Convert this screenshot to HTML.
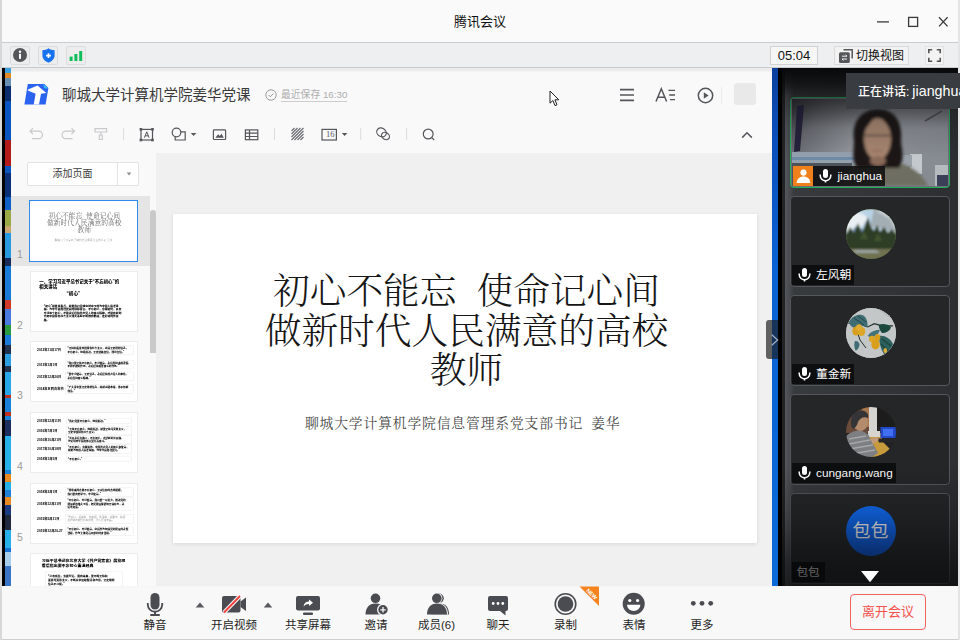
<!DOCTYPE html>
<html lang="zh-CN">
<head>
<meta charset="utf-8">
<title>腾讯会议</title>
<style>
*{box-sizing:border-box;margin:0;padding:0}
html,body{width:960px;height:640px;overflow:hidden;background:#fff}
body{font-family:"Liberation Sans","Noto Sans CJK SC",sans-serif;color:#222;position:relative}
.abs{position:absolute}
#win{position:absolute;left:0;top:0;width:960px;height:640px;background:#fff;overflow:hidden}
/* title bar */
#titlebar{position:absolute;left:0;top:0;width:960px;height:42px;background:#fafafa}
#titlebar .t{position:absolute;left:0;width:960px;top:13px;text-align:center;font-size:13px;line-height:18px;color:#111}
/* status bar */
#status{position:absolute;left:0;top:42px;width:960px;height:26px;background:#eeeff1;border-top:1px solid #cbcccd;border-bottom:1px solid #c9cacb}
.sbtn{position:absolute;top:2.500px;width:20px;height:19.500px;border:1px solid #dcdcdc;border-radius:2px;background:#ededed}
#time{position:absolute;left:770px;top:3px;width:48px;height:19px;border:1px solid #d2d2d2;background:#f6f6f6;font-size:13px;line-height:18px;text-align:center;color:#111}
#switch{position:absolute;left:834px;top:3px;width:75px;height:19px;border:1px solid #dadada;background:#f2f2f2;font-size:12px;line-height:18px;color:#111}
/* left desktop strip */
#edgeL{position:absolute;left:0;top:0;width:2px;height:640px;background:#d8d8d8}
#strip{position:absolute;left:2px;top:68px;width:9px;height:518px;background:#000}
#strip i{position:absolute;left:2.500px;top:0;width:6.500px;height:518px;background:linear-gradient(180deg,#3aa0e0 0px,#3aa0e0 5px,#e08a20 5px,#e08a20 10px,#6a8fb0 10px,#6a8fb0 18px,#0c2c6c 18px,#0c2c6c 33px,#0a55c0 33px,#0a55c0 72px,#b31a1a 72px,#b31a1a 98px,#0a55c0 98px,#0a55c0 105px,#0c3078 105px,#0c3078 129px,#1060c8 129px,#1060c8 142px,#9aa84a 142px,#9aa84a 158px,#c8a870 158px,#c8a870 165px,#2a9ae0 165px,#2a9ae0 190px,#1a2a58 190px,#1a2a58 198px,#1a7ad8 198px,#1a7ad8 232px,#d03828 232px,#d03828 241px,#4a7ae0 241px,#4a7ae0 257px,#2a9a40 257px,#2a9a40 267px,#1a7ad8 267px,#1a7ad8 277px,#22324e 277px,#22324e 286px,#2aa0e0 286px,#2aa0e0 298px,#22324e 298px,#22324e 304px,#28a8e8 304px,#28a8e8 327px,#c03020 327px,#c03020 330px,#1a80d8 330px,#1a80d8 344px,#c03020 344px,#c03020 348px,#1a80d8 348px,#1a80d8 352px,#1c2c5c 352px,#1c2c5c 368px,#28b0e8 368px,#28b0e8 402px,#1a80d8 402px,#1a80d8 406px,#e88a20 406px,#e88a20 414px,#28b0e8 414px,#28b0e8 422px,#2080d8 422px,#2080d8 429px,#e88a20 429px,#e88a20 437px,#1c3a80 437px,#1c3a80 447px,#20283c 447px,#20283c 462px,#28b0e8 462px,#28b0e8 480px,#1a70d0 480px,#1a70d0 484px,#a8cdea 484px,#a8cdea 498px,#3a74c4 498px,#3a74c4 518px)}
/* doc */
#doc{position:absolute;left:11px;top:68px;width:761px;height:518px;background:linear-gradient(180deg,#ebebeb 0,#ececec 2.500px,#f9f9fa 4.500px,#f9f9fa 100%)}
#canvas{position:absolute;left:144.500px;top:84.500px;width:616px;height:433.500px;background:#f0f0f0}
#slide{position:absolute;left:162px;top:146px;width:584px;height:329px;background:#fff;box-shadow:0 1px 4px rgba(0,0,0,.100)}
.serif{font-family:"Liberation Serif","Noto Serif CJK SC",serif}

/* left panel */
#addbtn{position:absolute;left:16px;top:94px;width:112px;height:24px;border:1px solid #e3e3e5;border-radius:2px;background:#fff;font-size:10px;line-height:22px;color:#3c3c3c}
#addbtn .sep{position:absolute;left:89px;top:0;width:1px;height:22px;background:#e3e3e5}
#selrow{position:absolute;left:0;top:128px;width:139px;height:70px;background:#e5e5e6}
#sbar{position:absolute;left:139px;top:142px;width:5.500px;height:142.500px;background:#c9c9c9;border-radius:3px 3px 0 0}
.th{position:absolute;left:19px;width:108px;height:61px;background:#fff;border:1px solid #ececee;overflow:hidden}
.th.sel{left:18px;width:109px;height:62px;border:1.500px solid #2d8cf0}
.tn{position:absolute;left:3px;width:12px;text-align:center;font-size:10.500px;line-height:10px;color:#9c9c9c}
.mini{position:absolute;left:0;top:0;width:584px;height:329px;transform:scale(0.1849);transform-origin:0 0;color:#000}
.mini .b{position:absolute;font-weight:900;white-space:nowrap;font-family:"Liberation Sans","Noto Sans CJK SC",sans-serif}
.mini .bx{position:absolute;border:2px solid #e2e2e2}
/* right panel */
#right{position:absolute;left:772px;top:68px;width:186px;height:518px;background:#000;overflow:hidden}
#right .blue{position:absolute;left:0;top:0;width:6px;height:518px;background:linear-gradient(180deg,#0b3f9c 0,#0a4db8 60px,#0a62d4 200px,#0a6ad8 100%)}
#right .gut{position:absolute;left:10px;top:0;width:3px;height:518px;background:#222325}
#right .pan{position:absolute;left:13px;top:0;width:173px;height:518px;background:linear-gradient(90deg,#54575c 0,#43464a 6px,#383b3e 9px,#35383b 60px,#2c2e31 100%)}
#right .fadeT{position:absolute;left:10px;top:0;width:176px;height:120px;background:linear-gradient(180deg,rgba(6,7,8,.96) 0,rgba(8,9,10,.800) 14px,rgba(10,11,12,.420) 30px,rgba(10,11,12,.150) 55px,rgba(10,11,12,0) 90px)}
#right .fadeB{position:absolute;left:10px;top:398px;width:176px;height:120px;background:linear-gradient(180deg,rgba(10,11,12,0) 0,rgba(10,11,12,.250) 50px,rgba(8,9,10,.620) 100px,rgba(8,9,10,.720) 120px)}
.tile{position:absolute;left:18px;width:160px;height:91px;border:1px solid #54575b;border-radius:4px;background:#242628;overflow:hidden}
.lab{position:absolute;left:1px;bottom:1px;height:20px;background:#0d0e0f;color:#fff;font-size:11.800px;line-height:20px;padding:0 3px 0 24px;white-space:nowrap}
.lab svg{position:absolute;left:5.500px;top:3px}
.av{position:absolute;left:54.500px;top:12px;width:50px;height:50px;border-radius:50%;overflow:hidden}
#tip{position:absolute;left:846px;top:73px;width:114px;height:36px;background:#393c40;color:#fff;font-size:12px;font-weight:500;line-height:36px;padding-left:12px;white-space:nowrap;overflow:hidden}
#handle{position:absolute;left:766px;top:320px;width:12px;height:39px;border-radius:3px 0 0 3px;background:rgba(28,28,30,.68)}
/* bottom bar */
#bottom{position:absolute;left:0;top:586px;width:960px;height:54px;background:#f8f8f8;border-top:1px solid #f5f5f5}
.bi{position:absolute;top:31px;font-size:11.500px;line-height:14px;color:#1e1e1e;text-align:center;width:70px;white-space:nowrap;font-weight:400}
</style>
</head>
<body>
<div id="win">
  <div id="titlebar"><div class="t">腾讯会议</div>
    <svg class="abs" style="left:870px;top:10px" width="84" height="24" viewBox="0 0 84 24" fill="none" stroke="#3a3a3a" stroke-width="1.3">
      <path d="M7 11.9H19"/>
      <rect x="38.6" y="7.4" width="9" height="9"/>
      <path d="M69 7.3L77.6 16.4M77.6 7.3L69 16.4"/>
    </svg>
  </div>
  <div id="status">
    <div class="sbtn" style="left:10px"><svg class="abs" style="left:2px;top:1.5px" width="14" height="14" viewBox="0 0 14 14"><circle cx="7" cy="7" r="7" fill="#55565a"/><rect x="6" y="5.8" width="2" height="5" fill="#fff"/><circle cx="7" cy="3.7" r="1.2" fill="#fff"/></svg></div>
    <div class="sbtn" style="left:38px"><svg class="abs" style="left:2.5px;top:1px" width="13" height="15" viewBox="0 0 13 15"><path d="M6.5 0.3C4.6 1.7 2.6 2.2 0.4 2.3V7.6C0.4 10.9 3 13.4 6.5 14.7C10 13.4 12.6 10.9 12.6 7.6V2.3C10.4 2.2 8.4 1.7 6.5 0.3Z" fill="#1872f0"/><path d="M6.5 5.2V10M4.1 7.6H8.9" stroke="#fff" stroke-width="1.7"/></svg></div>
    <div class="sbtn" style="left:66px"><svg class="abs" style="left:2px;top:2px" width="14" height="13" viewBox="0 0 14 13" fill="#0fbe5b"><rect x="0.6" y="7.6" width="3" height="4.4"/><rect x="5.4" y="5" width="3" height="7"/><rect x="10.2" y="2" width="3" height="10"/></svg></div>
    <div id="time">05:04</div>
    <div id="switch"><svg class="abs" style="left:4px;top:2px" width="14" height="14" viewBox="0 0 14 14"><path d="M4.5 0.8H13.2V9.5" fill="none" stroke="#55565a" stroke-width="1.5"/><rect x="0" y="3.2" width="10.8" height="10.8" rx="1.5" fill="#55565a"/><path d="M3 7.2H8M6.6 5.8L8 7.2M8 10H3M4.4 11.4L3 10" stroke="#f2f2f2" stroke-width="1" fill="none"/></svg><span style="position:absolute;left:21px;top:0">切换视图</span></div>
    <div class="abs" style="left:925px;top:3px;width:19px;height:19px;border:1px solid #e2e2e2;background:#f3f3f3"><svg class="abs" style="left:2px;top:2px" width="13" height="13" viewBox="0 0 13 13" fill="none" stroke="#55565a" stroke-width="1.6"><path d="M0.8 4.2V0.8H4.2M8.8 0.8H12.2V4.2M12.2 8.8V12.2H8.8M4.2 12.2H0.8V8.8"/></svg></div>
  </div>
  <div id="strip"><i></i></div>
  <div id="doc">

    <!-- doc header -->
    <svg class="abs" style="left:13px;top:16px" width="26" height="22" viewBox="0 0 26 22">
      <path d="M3.800 0H20.400L24.400 4.100L21.600 20.400H0.400Z" fill="#2b63f0"/>
      <path d="M19 0.100L24.400 4.500L20.300 4.200Z" fill="#35c4f2"/>
      <path d="M13.500 1.600L22.250 9.100L17 9.750L15 20.400H9.750L11.600 9.750L4.300 6.700L3.500 5.800Z" fill="#fff"/>
    </svg>
    <div class="abs" style="left:51px;top:17px;font-size:14.5px;line-height:20px;color:#3a3a3a;white-space:nowrap">聊城大学计算机学院姜华党课</div>
    <svg class="abs" style="left:253.600px;top:21px" width="12" height="12" viewBox="0 0 12 12" fill="none" stroke="#9a9a9a" stroke-width="1"><circle cx="6" cy="6" r="5.2"/><path d="M3.6 6.1L5.3 7.8L8.5 4.5"/></svg>
    <div class="abs" style="left:270px;top:20.500px;font-size:9.800px;line-height:12px;color:#adadad;white-space:nowrap;border-bottom:1px solid #cdcdcd">最近保存 16:30</div>
    <!-- cursor -->
    <svg class="abs" style="left:538px;top:22px" width="12" height="17" viewBox="0 0 12 17"><path d="M1 1V13.2L3.9 10.5L6 15.6L8 14.8L5.9 9.8H9.8Z" fill="#fff" stroke="#222" stroke-width="1"/></svg>
    <!-- header right icons -->
    <svg class="abs" style="left:608px;top:20px" width="16" height="14" viewBox="0 0 16 14" stroke="#55565a" stroke-width="1.7"><path d="M1 1.6H15M1 7H15M1 12.4H15"/></svg>
    <svg class="abs" style="left:644px;top:19px" width="21" height="16" viewBox="0 0 21 16" fill="none" stroke="#55565a" stroke-width="1.5"><path d="M1 14.5L6.3 1.8L11.6 14.5M2.9 10.2H9.7"/><path d="M13.4 3.4H20M14.2 8H20M15 12.6H20" stroke-width="1.3"/></svg>
    <svg class="abs" style="left:686px;top:19px" width="17" height="17" viewBox="0 0 17 17"><circle cx="8.5" cy="8.5" r="7.2" fill="none" stroke="#55565a" stroke-width="1.5"/><path d="M6.8 5.2L11.6 8.5L6.8 11.8Z" fill="#55565a"/></svg>
    <div class="abs" style="left:709.500px;top:19px;width:1px;height:17px;background:#ebebed"></div>
    <div class="abs" style="left:723px;top:15px;width:22px;height:22px;border-radius:3px;background:#e9e9ea"></div>
    <!-- toolbar -->
    <svg class="abs" style="left:14px;top:54px" width="440" height="24" viewBox="0 0 440 24" fill="none" stroke="#55565a" stroke-width="1.2">
      <g stroke="#c9c9cc">
        <path d="M8 6.200L5 9.200L8 12.200M5.300 9.200H13.700A3.600 3.600 0 0 1 13.700 16.600H7"/>
        <path d="M46.500 6.200L49.500 9.200L46.500 12.200M49.200 9.200H40.800A3.600 3.600 0 0 0 40.800 16.600H47.500"/>
        <path d="M70 6.600H81.600V10H70ZM75.800 10V13M74.300 13H77.300V17.500H74.300Z"/>
      </g>
      <path d="M98.600 6V18M249.500 6V18M335.700 6V18M381.600 6V18" stroke="#dcdcde" stroke-width="1"/>
      <!-- text box -->
      <rect x="116" y="7.400" width="11.500" height="10.600"/>
      <g fill="#55565a" stroke="none"><rect x="114.600" y="6" width="2.600" height="2.600"/><rect x="126.200" y="6" width="2.600" height="2.600"/><rect x="114.600" y="16.700" width="2.600" height="2.600"/><rect x="126.200" y="16.700" width="2.600" height="2.600"/></g>
      <path d="M119.400 15.700L121.750 9.800L124.100 15.700M120.200 13.800H123.300" stroke-width="1"/>
      <!-- shapes -->
      <circle cx="151.500" cy="10.500" r="4.300"/>
      <path d="M155.900 9.800H160.200V18H150.200V14.800"/>
      <path d="M165.800 11H171.400L168.600 14Z" fill="#55565a" stroke="none"/>
      <!-- image -->
      <rect x="188.400" y="7.900" width="12.200" height="9.600" rx="0.800"/>
      <path d="M190.400 15.700L193.100 12.300L194.800 14.100L196.500 11.700L198.800 15.700Z" fill="#55565a" stroke="none"/>
      <!-- table -->
      <rect x="220.400" y="7.900" width="12.400" height="9.800"/>
      <path d="M220.400 11.200H232.800M220.400 14.500H232.800M224.500 7.900V17.700"/>
      <!-- hatch -->
      <g stroke-width="1.100" stroke="#6a6b70"><path d="M266.500 9L269.500 6M266.500 12L272.500 6M266.500 15L275.500 6M266.500 18L278.500 6M269.500 18L278.500 9M272.500 18L278.500 12M275.500 18L278.500 15"/></g>
      <!-- 16 box -->
      <rect x="297" y="7.400" width="14.400" height="10.600"/>
      <!-- caret -->
      <path d="M316.800 11H322.400L319.600 14Z" fill="#55565a" stroke="none"/>
      <!-- link-ish -->
      <ellipse cx="356.500" cy="10.400" rx="5" ry="4.200" transform="rotate(35 356.500 10.400)"/>
      <ellipse cx="360.500" cy="14" rx="4.200" ry="3.300" transform="rotate(35 360.500 14)"/>
      <!-- search -->
      <circle cx="403.200" cy="12" r="4.900"/>
      <path d="M406.800 15.600L409.200 18"/>
    </svg>
    <div class="abs" style="left:313.200px;top:62.300px;width:12px;font-size:8.500px;line-height:9px;color:#55565a;text-align:center;font-family:'Liberation Serif',serif">16</div>
    <svg class="abs" style="left:729.500px;top:62.500px" width="12" height="8" viewBox="0 0 12 8" fill="none" stroke="#55565a" stroke-width="1.500"><path d="M1.200 6.600L6 1.800L10.800 6.600"/></svg>

    <!-- left thumbnails panel -->
    <div id="addbtn"><span style="position:absolute;left:0;width:89px;text-align:center">添加页面</span><span class="sep"></span><svg class="abs" style="left:98px;top:9px" width="6" height="4" viewBox="0 0 6 4"><path d="M0.800 0.500H5.200L3 3.500Z" fill="#8a8a8a"/></svg></div>
    <div id="selrow"></div>
    <div id="sbar"></div>
    <div class="th sel" style="top:131.5px"><div class="mini"><div class="serif" style="position:absolute;left:1.500px;top:58px;width:584px;text-align:center;font-size:36.700px;line-height:39.500px;color:#555;font-weight:300;white-space:nowrap">初心不能忘<span style="display:inline-block;width:20px"> </span>使命记心间<br>做新时代人民满意的高校<br>教师</div>
<div class="serif" style="position:absolute;left:-2px;top:199px;width:584px;text-align:center;font-size:13.800px;letter-spacing:.850px;color:#777">聊城大学计算机学院信息管理系党支部书记 姜华</div></div></div>
    <div class="tn" style="top:181.0px">1</div>
    <div class="th" style="top:203px"><div class="mini"><div class="b" style="left:45px;top:38px;font-size:24px;line-height:27px">一、学习习近平总书记关于“不忘初心”的<br>相关讲话</div>
<div class="b" style="left:192px;top:103px;font-size:25px;line-height:30px">“初心”</div>
<div class="b" style="left:69px;top:174px;font-size:15px;line-height:19px;white-space:normal;width:430px">“初心”就是出发点，就是我们党成立时立下的为中国人民谋幸福、为中华民族谋复兴的铮铮誓言。不忘初心，方得始终，只有牢记这个初心，才能永远保持共产党人的奋斗精神，才能在新时代把中国特色社会主义伟大事业不断推向前进，走好新的长征路。</div></div></div>
    <div class="tn" style="top:252.0px">2</div>
    <div class="th" style="top:273px"><div class="mini"><div class="b" style="left:33px;top:35px;font-size:17.500px;line-height:20px;font-weight:700">2012年11月17日</div><div class="bx" style="left:187px;top:20px;width:367px;height:50px"></div><div class="b" style="left:197px;top:26px;font-size:14px;line-height:19px">“坚持和发展中国特色社会主义，必须坚定理想信念，</div><div class="b" style="left:197px;top:45px;font-size:14px;line-height:19px">不忘初心，继续前进，坚定道路自信、理论自信。”</div><div class="b" style="left:33px;top:112px;font-size:17.500px;line-height:20px;font-weight:700">2013年1月1日</div><div class="bx" style="left:187px;top:97px;width:367px;height:50px"></div><div class="b" style="left:197px;top:103px;font-size:14px;line-height:19px">“我们要坚持不忘初心，牢记使命，永远保持谦虚谨慎、</div><div class="b" style="left:197px;top:122px;font-size:14px;line-height:19px">不骄不躁的作风，永远保持艰苦奋斗的作风。”</div><div class="b" style="left:33px;top:176px;font-size:17.500px;line-height:20px;font-weight:700">2013年12月26日</div><div class="bx" style="left:187px;top:161px;width:367px;height:50px"></div><div class="b" style="left:197px;top:167px;font-size:14px;line-height:19px">“要牢记使命，坚定信念，永远保持共产党人的本色，</div><div class="b" style="left:197px;top:186px;font-size:14px;line-height:19px">永远保持奋斗精神。”</div><div class="b" style="left:33px;top:244px;font-size:17.500px;line-height:20px;font-weight:700">2014年五四青年节</div><div class="bx" style="left:187px;top:229px;width:367px;height:50px"></div><div class="b" style="left:197px;top:235px;font-size:14px;line-height:19px">“广大青年要坚定理想信念，练就过硬本领，勇于创新</div><div class="b" style="left:197px;top:254px;font-size:14px;line-height:19px">创造。”</div></div></div>
    <div class="tn" style="top:322.0px">3</div>
    <div class="th" style="top:343.5px"><div class="mini"><div class="b" style="left:33px;top:32px;font-size:17.500px;line-height:20px;font-weight:700">2015年12月11日</div><div class="bx" style="left:190px;top:27px;width:355px;height:31px"></div><div class="b" style="left:200px;top:33px;font-size:14px;line-height:19px">“我们党要不忘初心，继续前进。”</div><div class="b" style="left:33px;top:85px;font-size:17.500px;line-height:20px;font-weight:700">2016年7月1日</div><div class="bx" style="left:190px;top:70px;width:355px;height:50px"></div><div class="b" style="left:200px;top:76px;font-size:14px;line-height:19px">“坚持不忘初心、继续前进，就要坚持马克思主义，</div><div class="b" style="left:200px;top:95px;font-size:14px;line-height:19px">坚定中国特色社会主义。”</div><div class="b" style="left:33px;top:133px;font-size:17.500px;line-height:20px;font-weight:700">2016年10月21日</div><div class="bx" style="left:190px;top:118px;width:355px;height:50px"></div><div class="b" style="left:200px;top:124px;font-size:14px;line-height:19px">“长征永远在路上，不忘初心，走好新的长征路，</div><div class="b" style="left:200px;top:143px;font-size:14px;line-height:19px">为实现中华民族伟大复兴而奋斗。”</div><div class="b" style="left:33px;top:184px;font-size:17.500px;line-height:20px;font-weight:700">2017年10月18日</div><div class="bx" style="left:190px;top:169px;width:355px;height:50px"></div><div class="b" style="left:200px;top:175px;font-size:14px;line-height:19px">“不忘初心，方得始终。中国共产党人的初心和使命，</div><div class="b" style="left:200px;top:194px;font-size:14px;line-height:19px">就是为中国人民谋幸福，为中华民族谋复兴。”</div><div class="b" style="left:33px;top:237px;font-size:17.500px;line-height:20px;font-weight:700">2018年1月5日</div><div class="bx" style="left:190px;top:232px;width:355px;height:31px"></div><div class="b" style="left:200px;top:238px;font-size:14px;line-height:19px">“不忘初心。”</div></div></div>
    <div class="tn" style="top:392.5px">4</div>
    <div class="th" style="top:414.5px"><div class="mini"><div class="b" style="left:33px;top:35px;font-size:17.500px;line-height:20px;font-weight:700">2018年3月1日</div><div class="bx" style="left:187px;top:20px;width:367px;height:50px"></div><div class="b" style="left:197px;top:26px;font-size:14px;line-height:19px">“周恩来同志是不忘初心、坚守信仰的杰出楷模，</div><div class="b" style="left:197px;top:45px;font-size:14px;line-height:19px">我们要向他学习，牢记使命。”</div><div class="b" style="left:33px;top:98px;font-size:17.500px;line-height:20px;font-weight:700">2018年12月31日</div><div class="bx" style="left:187px;top:74px;width:367px;height:69px"></div><div class="b" style="left:197px;top:80px;font-size:14px;line-height:19px">“不忘初心、牢记使命，我们要一以贯之，推进党的</div><div class="b" style="left:197px;top:99px;font-size:14px;line-height:19px">建设新的伟大工程，把党建设得更加坚强有力，永</div><div class="b" style="left:197px;top:118px;font-size:14px;line-height:19px">远不变质。”</div><div class="b" style="left:33px;top:178px;font-size:17.500px;line-height:20px;font-weight:700">2019年5月31日</div><div class="bx" style="left:187px;top:163px;width:367px;height:50px"></div><div class="b" style="left:197px;top:169px;font-size:14px;line-height:19px;color:#999;font-weight:400">“守初心、担使命，找差距、抓落实，总要求，确保</div><div class="b" style="left:197px;top:188px;font-size:14px;line-height:19px;color:#999;font-weight:400">主题教育取得扎实成效，为人民谋幸福。”</div><div class="b" style="left:33px;top:246px;font-size:17.500px;line-height:20px;font-weight:700">2019年12月26-27</div><div class="bx" style="left:187px;top:231px;width:367px;height:50px"></div><div class="b" style="left:197px;top:237px;font-size:14px;line-height:19px">“不忘初心、牢记使命，必须作为加强党的建设的永恒</div><div class="b" style="left:197px;top:256px;font-size:14px;line-height:19px">课题，作为全体党员干部的终身课题。”</div></div></div>
    <div class="tn" style="top:463.5px">5</div>
    <div class="th" style="top:485px"><div class="mini"><div class="b" style="left:58px;top:22px;font-size:21.500px;line-height:27px">习近平总书记在北京大学《共产党宣言》展览观<br>看后指出要不忘初心重温经典</div>
<div class="bx" style="left:76px;top:96px;width:420px;height:120px"></div>
<div class="b" style="left:92px;top:112px;font-size:15px;line-height:19px">“心有所信，方能行远。面向未来，要不断坚持和<br>发展马克思主义，不断从中汲取智慧和力量，坚定理想<br>信念不动摇。”</div></div></div>
    <div id="canvas"></div>
    <div id="slide">
      <div class="serif" style="position:absolute;left:1.500px;top:58px;width:584px;text-align:center;font-size:36.700px;line-height:39.500px;color:#161616;font-weight:300;white-space:nowrap">初心不能忘<span style="display:inline-block;width:20px"> </span>使命记心间<br>做新时代人民满意的高校<br>教师</div>
      <div class="serif" style="position:absolute;left:-2.300px;top:199.500px;width:584px;text-align:center;font-size:13.800px;line-height:20px;letter-spacing:.850px;color:#4a4a4a;white-space:nowrap">聊城大学计算机学院信息管理系党支部书记<span style="display:inline-block;width:8px"> </span>姜华</div>
    </div>
  </div>
  <div id="right">
    <div class="blue"></div><div class="gut"></div><div class="pan"></div>
    <!-- tile 1 : video -->
    <div class="tile" style="top:29px;border-color:#1fae5b;background:#6d7177">
      <svg class="abs" style="left:1px;top:1px" width="156" height="87" viewBox="0 0 156 87">
        <defs>
          <linearGradient id="wall" x1="0" y1="0" x2="1" y2="0.350"><stop offset="0" stop-color="#3c3e44"/><stop offset="0.200" stop-color="#6a6d73"/><stop offset="0.500" stop-color="#90949a"/><stop offset="1" stop-color="#878b92"/></linearGradient>
          <linearGradient id="vig" x1="0" y1="0" x2="0" y2="1"><stop offset="0" stop-color="#1c1d20" stop-opacity=".450"/><stop offset="0.350" stop-color="#1c1d20" stop-opacity="0"/></linearGradient>
          <filter id="bl" x="-20%" y="-20%" width="140%" height="140%"><feGaussianBlur stdDeviation="1.400"/></filter>
          <filter id="bl2" x="-20%" y="-20%" width="140%" height="140%"><feGaussianBlur stdDeviation="0.700"/></filter>
        </defs>
        <rect width="156" height="87" fill="url(#wall)"/>
        <rect width="156" height="87" fill="url(#vig)"/>
        <path d="M5 7L12 6L8 52L2 53Z" fill="#25243c" filter="url(#bl2)"/>
        <g filter="url(#bl2)">
          <rect x="0" y="53" width="70" height="14" fill="#93a0ae"/>
          <rect x="0" y="58" width="70" height="3" fill="#6f8aa6"/>
          <rect x="0" y="64" width="60" height="23" fill="#4d5258"/>
          <rect x="118" y="55" width="12" height="20" fill="#c4c9ce"/>
          <rect x="104" y="56" width="16" height="12" fill="#9aa1a8"/>
          <rect x="143" y="66" width="13" height="21" fill="#b5babf"/>
          <rect x="145" y="76" width="11" height="11" fill="#3a3f58"/>
          <path d="M133 22L150 12" stroke="#4a4c50" stroke-width="1.500"/>
        </g>
        <g filter="url(#bl)">
          <path d="M50 87C52 72 60 66 72 63L100 62C118 66 128 72 136 87Z" fill="#6e6e62"/>
          <path d="M62 42C59 22 70 10 86 10C102 10 111 22 109 42C110 53 113 60 107 69L65 69C59 60 62 53 62 42Z" fill="#1a1617"/>
          <ellipse cx="85.500" cy="40" rx="13.500" ry="21" fill="#a78671"/>
          <path d="M71 34C72 22 78 15 85 14C82 20 76 26 71 34Z" fill="#1a1617"/>
          <path d="M100.500 34C100 22 94 15 86 14C90 20 96 26 100.500 34Z" fill="#1a1617"/>
          <path d="M73 36.500H98.500" stroke="#4f3f3a" stroke-width="1.500"/>
          <path d="M80 52H91" stroke="#8a5f55" stroke-width="1.200"/>
          <ellipse cx="86" cy="62" rx="8" ry="5" fill="#8a6a58"/>
        </g>
      </svg>
      <div class="abs" style="left:2px;bottom:1px;width:20px;height:20px;background:#f0801b"><svg class="abs" style="left:2.500px;top:3px" width="15" height="14" viewBox="0 0 15 14" fill="#fff"><circle cx="7.500" cy="3.600" r="3.100"/><path d="M0.600 14C1 9.800 3.600 7.600 7.500 7.600C11.400 7.600 14 9.800 14.400 14Z"/></svg></div>
      <div class="lab" style="left:22px;background:rgba(14,14,15,.860);font-weight:500;padding-left:24.500px"><svg width="13" height="14" viewBox="0 0 13 14"><rect x="4" y="0" width="5" height="9" rx="2.500" fill="#fff"/><path d="M1.200 5.600V6.500A5.300 5.300 0 0 0 11.800 6.500V5.600" fill="none" stroke="#fff" stroke-width="1.500"/><path d="M6.500 11.500V13.600" stroke="#fff" stroke-width="1.600"/></svg>jianghua</div>
    </div>
    <!-- tile 2 -->
    <div class="tile" style="top:128px">
      <div class="av" style="background:#4a5a3c">
        <svg width="50" height="50" viewBox="0 0 50 50">
          <defs><filter id="b3"><feGaussianBlur stdDeviation="0.800"/></filter></defs>
          <rect width="50" height="50" fill="#55663f"/>
          <g filter="url(#b3)">
          <rect width="50" height="24" fill="#b9d3e6"/>
          <path d="M0 6C8 2 16 3 22 9L14 20L0 22Z" fill="#e9eff3"/>
          <path d="M28 0H50V24L38 20L24 18Z" fill="#a3aeb4"/>
          <path d="M30 2L44 10L50 22V10L40 0Z" fill="#c9d0d4"/>
          <path d="M4 24L10 17L18 21L24 18V26H4Z" fill="#6f93ad"/>
          <path d="M0 26L4 18L8 24L12 14L16 24L19 16L22 8L25 18L28 22L31 16L34 23L38 18L42 24L46 20L50 26V42H0Z" fill="#2f3d27"/>
          <path d="M14 30L18 22L22 30ZM28 32L32 24L36 32Z" fill="#41542f"/>
          <rect y="40" width="50" height="10" fill="#6f7250"/>
          <path d="M6 41H30L34 44H10Z" fill="#9aa3a0"/>
          </g>
        </svg>
      </div>
      <div class="lab"><svg width="13" height="14" viewBox="0 0 13 14"><rect x="4" y="0" width="5" height="9" rx="2.500" fill="#fff"/><path d="M1.200 5.600V6.500A5.300 5.300 0 0 0 11.800 6.500V5.600" fill="none" stroke="#fff" stroke-width="1.500"/><path d="M6.500 11.500V13.600" stroke="#fff" stroke-width="1.600"/></svg>左风朝</div>
    </div>
    <!-- tile 3 -->
    <div class="tile" style="top:227px">
      <div class="av" style="background:#c4c8c8">
        <svg width="50" height="50" viewBox="0 0 50 50">
          <defs><filter id="b4"><feGaussianBlur stdDeviation="0.600"/></filter></defs>
          <rect width="50" height="50" fill="#c3c7c7"/>
          <g filter="url(#b4)">
            <path d="M0 34L14 50H0ZM30 0L50 14V0Z" fill="#b1b6b6"/>
            <path d="M2 15L11.800 15.700L21.700 19L28.300 15.700L36 17.900L47 17.900" fill="none" stroke="#23302c" stroke-width="1.100"/>
            <path d="M3 14C6 8 12 6 16 7C20 8 22 13 21.500 19C18 17 14 18 10 20C7 20 4 18 3 14Z" fill="#3f6c73"/>
            <path d="M8 10L18 17M12 8L20 14" stroke="#26484c" stroke-width="1"/>
            <path d="M32.700 17C36 15 42 16 45 19C44 23 40 25 36 25C34 23 33 20 32.700 17Z" fill="#1e4a3d"/>
            <path d="M21.700 28C24 24 29 21.500 33.800 22C33 26 29 29 25 29.500Z" fill="#43727a"/>
            <path d="M33 28C38 27 44 30 47 36C46 41 43 45 38 46C35 42 33 34 33 28Z" fill="#2f5f5e"/>
            <path d="M36 31L45 38M35 36L42 43" stroke="#1c443a" stroke-width="1.200"/>
            <path d="M9 33C11 32.500 13.500 34 13.500 37C13 40 11 42.500 9.500 42.500C8 39 8 36 9 33Z" fill="#3f6c73"/>
            <path d="M12 26L14 32L20 40" fill="none" stroke="#23302c" stroke-width="1"/>
            <ellipse cx="10" cy="23" rx="3.800" ry="4.600" fill="#d89f1f"/>
            <ellipse cx="15.500" cy="23.500" rx="3.800" ry="4.600" fill="#dca625"/>
            <ellipse cx="13" cy="19.500" rx="3" ry="3.200" fill="#e0ad33"/>
            <ellipse cx="26" cy="31" rx="3" ry="3.200" fill="#dca625"/>
            <ellipse cx="31.500" cy="29.500" rx="2.800" ry="3.400" fill="#d89f1f"/>
            <ellipse cx="29.500" cy="36.500" rx="4.200" ry="5" fill="#d99f1e"/>
            <ellipse cx="39.300" cy="42.500" rx="1.800" ry="2.600" fill="#dfae30"/>
          </g>
        </svg>
      </div>
      <div class="lab"><svg width="13" height="14" viewBox="0 0 13 14"><rect x="4" y="0" width="5" height="9" rx="2.500" fill="#fff"/><path d="M1.200 5.600V6.500A5.300 5.300 0 0 0 11.800 6.500V5.600" fill="none" stroke="#fff" stroke-width="1.500"/><path d="M6.500 11.500V13.600" stroke="#fff" stroke-width="1.600"/></svg>董金新</div>
    </div>
    <!-- tile 4 -->
    <div class="tile" style="top:326px">
      <div class="av" style="background:#2a2624">
        <svg width="50" height="50" viewBox="0 0 50 50">
          <defs><filter id="b5"><feGaussianBlur stdDeviation="0.700"/></filter></defs>
          <rect width="50" height="50" fill="#242124"/>
          <g filter="url(#b5)">
            <rect x="0" y="0" width="24" height="26" fill="#6a4c3a"/>
            <rect x="16" y="0" width="7" height="20" fill="#a8764e"/>
            <rect x="23" y="0" width="8" height="27" fill="#d6d4d0"/>
            <rect x="31" y="0" width="19" height="20" fill="#1a1a1e"/>
            <path d="M22 26H36V34L46 44L30 50H24Z" fill="#c79a3a"/>
            <rect x="22" y="24" width="12" height="6" fill="#d8d5cf"/>
            <rect x="34.500" y="20" width="15.500" height="11" fill="#2148c8"/>
            <rect x="37" y="22" width="10" height="7" fill="#3f6ff0"/>
            <path d="M31 31.500H50V35.500H33Z" fill="#26262c"/>
            <path d="M0 30C2 26 8 24 14 23L22 27L32 46L26 50H0Z" fill="#7d7f82"/>
            <path d="M3 32L20 29M3 37L24 33M3 42L27 38M5 47L29 43" stroke="#a5a7aa" stroke-width="1.300"/>
            <path d="M24 32L31 30L33 33L27 37Z" fill="#c09a7a"/>
            <ellipse cx="14.500" cy="15" rx="7.500" ry="9" fill="#b48c6c"/>
            <path d="M5 17C4 9 9 3 16 3.500C21 4 23 8 22 11C18 9 14 11 12 15C11 19 9 21 7 22C6 21 5 19 5 17Z" fill="#353537"/>
          </g>
        </svg>
      </div>
      <div class="lab"><svg width="13" height="14" viewBox="0 0 13 14"><rect x="4" y="0" width="5" height="9" rx="2.500" fill="#fff"/><path d="M1.200 5.600V6.500A5.300 5.300 0 0 0 11.800 6.500V5.600" fill="none" stroke="#fff" stroke-width="1.500"/><path d="M6.500 11.500V13.600" stroke="#fff" stroke-width="1.600"/></svg>cungang.wang</div>
    </div>
    <!-- tile 5 -->
    <div class="tile" style="top:425px">
      <div class="av" style="background:linear-gradient(180deg,#1070ff 0,#0e68f4 40%,#0c58dc 100%);color:#ffffff;font-size:18px;line-height:50px;text-align:center">包包</div>
      <div class="lab" style="padding:0 5px 0 4.500px;color:#fff;font-size:11.500px;background:#0a0a0b">包包</div>
    </div>
    <div class="fadeT"></div><div class="fadeB"></div>
    <svg class="abs" style="left:89px;top:503px" width="18" height="12" viewBox="0 0 18 12"><path d="M0 0H18L9 11.300Z" fill="#fff"/></svg>
  </div>
  <div id="tip">正在讲话:<span style="font-size:14.300px;margin-left:3px">jianghua</span></div>
  <div id="handle"><svg class="abs" style="left:5px;top:14px" width="8" height="12" viewBox="0 0 8 12" fill="none" stroke="#a3b0c6" stroke-width="1.200"><path d="M0.800 0.800L6.600 6L0.800 11.200"/></svg></div>
  <div id="bottom">
    <svg class="abs" style="left:0;top:-1px" width="960" height="53" viewBox="0 586 960 53">
      <g fill="#4b4c51">
        <!-- mic -->
        <rect x="150.500" y="593" width="9" height="16.500" rx="4.500"/>
        <path d="M147.800 603V604.500A7.200 7.200 0 0 0 162.200 604.500V603" fill="none" stroke="#4b4c51" stroke-width="1.800"/>
        <rect x="154" y="611" width="2" height="3.500"/>
        <rect x="150" y="614" width="10" height="2" rx="1"/>
        <!-- carets -->
        <path d="M195.700 607.500H204.300L200 602.500Z" fill="#5a5b60"/>
        <path d="M263.700 607.500H272.300L268 602.500Z" fill="#5a5b60"/>
        <!-- video -->
        <rect x="222" y="596" width="18.500" height="16.500" rx="2"/>
        <path d="M240.500 601.500L246 597.500V611L240.500 607Z"/>
        <path d="M224 612.500L240 596" stroke="#f8f8f8" stroke-width="4"/>
        <path d="M224 612.500L240 596" stroke="#f23c3c" stroke-width="1.800"/>
        <!-- share -->
        <rect x="296" y="596" width="24" height="14.500" rx="2"/>
        <rect x="303" y="612.500" width="10" height="2.500" rx="1"/>
        <path d="M303.500 606.500C304 603 306 601.500 309 601.500V599.500L313 602.800L309 606V604C306.500 604 305 604.800 303.500 606.500Z" fill="#fff"/>
        <!-- invite -->
        <circle cx="375.500" cy="598.300" r="4.800"/>
        <path d="M365.500 614.500C365.500 608 369 603.500 375.500 603.500C380 603.500 383 605.500 384.500 609V614.500Z"/>
        <circle cx="383" cy="609.800" r="6" fill="#f8f8f8"/>
        <circle cx="383" cy="609.800" r="4.700"/>
        <path d="M380.300 609.800H385.700M383 607.100V612.500" stroke="#f8f8f8" stroke-width="1.300"/>
        <!-- members -->
        <circle cx="439" cy="598.300" r="4.800"/>
        <path d="M431 614.500C431 608 434 603.500 440 603.500C446 603.500 449 608 449 614.500Z"/>
        <circle cx="436.800" cy="598.300" r="5.600" fill="#f8f8f8"/>
        <path d="M426 614.500C426 607.500 430 602.700 437 602.700C444 602.700 448 607.500 448 614.500Z" fill="#f8f8f8"/>
        <circle cx="436.800" cy="598.300" r="4.800"/>
        <path d="M427 614.500C427 608 430.500 603.500 437 603.500C443.500 603.500 447 608 447 614.500Z"/>
        <!-- chat -->
        <path d="M490 596H506A2 2 0 0 1 508 598V609A2 2 0 0 1 506 611H505.500V615.500L500 611H490A2 2 0 0 1 488 609V598A2 2 0 0 1 490 596Z"/>
        <circle cx="493.200" cy="603.500" r="1.400" fill="#fff"/><circle cx="498" cy="603.500" r="1.400" fill="#fff"/><circle cx="502.800" cy="603.500" r="1.400" fill="#fff"/>
        <!-- record -->
        <circle cx="565.500" cy="604" r="10.300" fill="none" stroke="#4b4c51" stroke-width="1.600"/>
        <circle cx="565.500" cy="604" r="7.800"/>
        <!-- emoji -->
        <circle cx="633.700" cy="603.700" r="11"/>
        <circle cx="629.800" cy="600.500" r="1.600" fill="#fff"/><circle cx="637.600" cy="600.500" r="1.600" fill="#fff"/>
        <path d="M627 604.800H640.400A6.700 6.200 0 0 1 627 604.800Z" fill="#fff"/>
        <!-- more -->
        <circle cx="693.300" cy="603.300" r="2.400"/><circle cx="702" cy="603.300" r="2.400"/><circle cx="710.700" cy="603.300" r="2.400"/>
      </g>
      <path d="M579.500 586.500H599V606Z" fill="#f5831f"/>
      <text x="0" y="0" transform="translate(590.500 595.500) rotate(45)" text-anchor="middle" font-size="5.500" font-weight="700" fill="#fff" font-family="Liberation Sans, sans-serif">NEW</text>
    </svg>
    <div class="bi" style="left:120px">静音</div>
    <div class="bi" style="left:199px">开启视频</div>
    <div class="bi" style="left:273px">共享屏幕</div>
    <div class="bi" style="left:341px">邀请</div>
    <div class="bi" style="left:401.500px">成员(6)</div>
    <div class="bi" style="left:463px">聊天</div>
    <div class="bi" style="left:530.500px">录制</div>
    <div class="bi" style="left:599px">表情</div>
    <div class="bi" style="left:667px">更多</div>
    <div class="abs" style="left:850px;top:7px;width:76px;height:36px;border:1px solid #f4605c;border-radius:4px;color:#f4504c;font-size:13px;line-height:34px;text-align:center">离开会议</div>
  </div>
  <div class="abs" style="left:0;top:638.500px;width:960px;height:1.500px;background:#cfcfcf"></div>
  <div class="abs" style="left:958px;top:0;width:2px;height:73px;background:#e4e4e4"></div>
  <div class="abs" style="left:958px;top:108px;width:2px;height:532px;background:#e4e4e4"></div>
  <div id="edgeL"></div>
</div>
</body>
</html>
